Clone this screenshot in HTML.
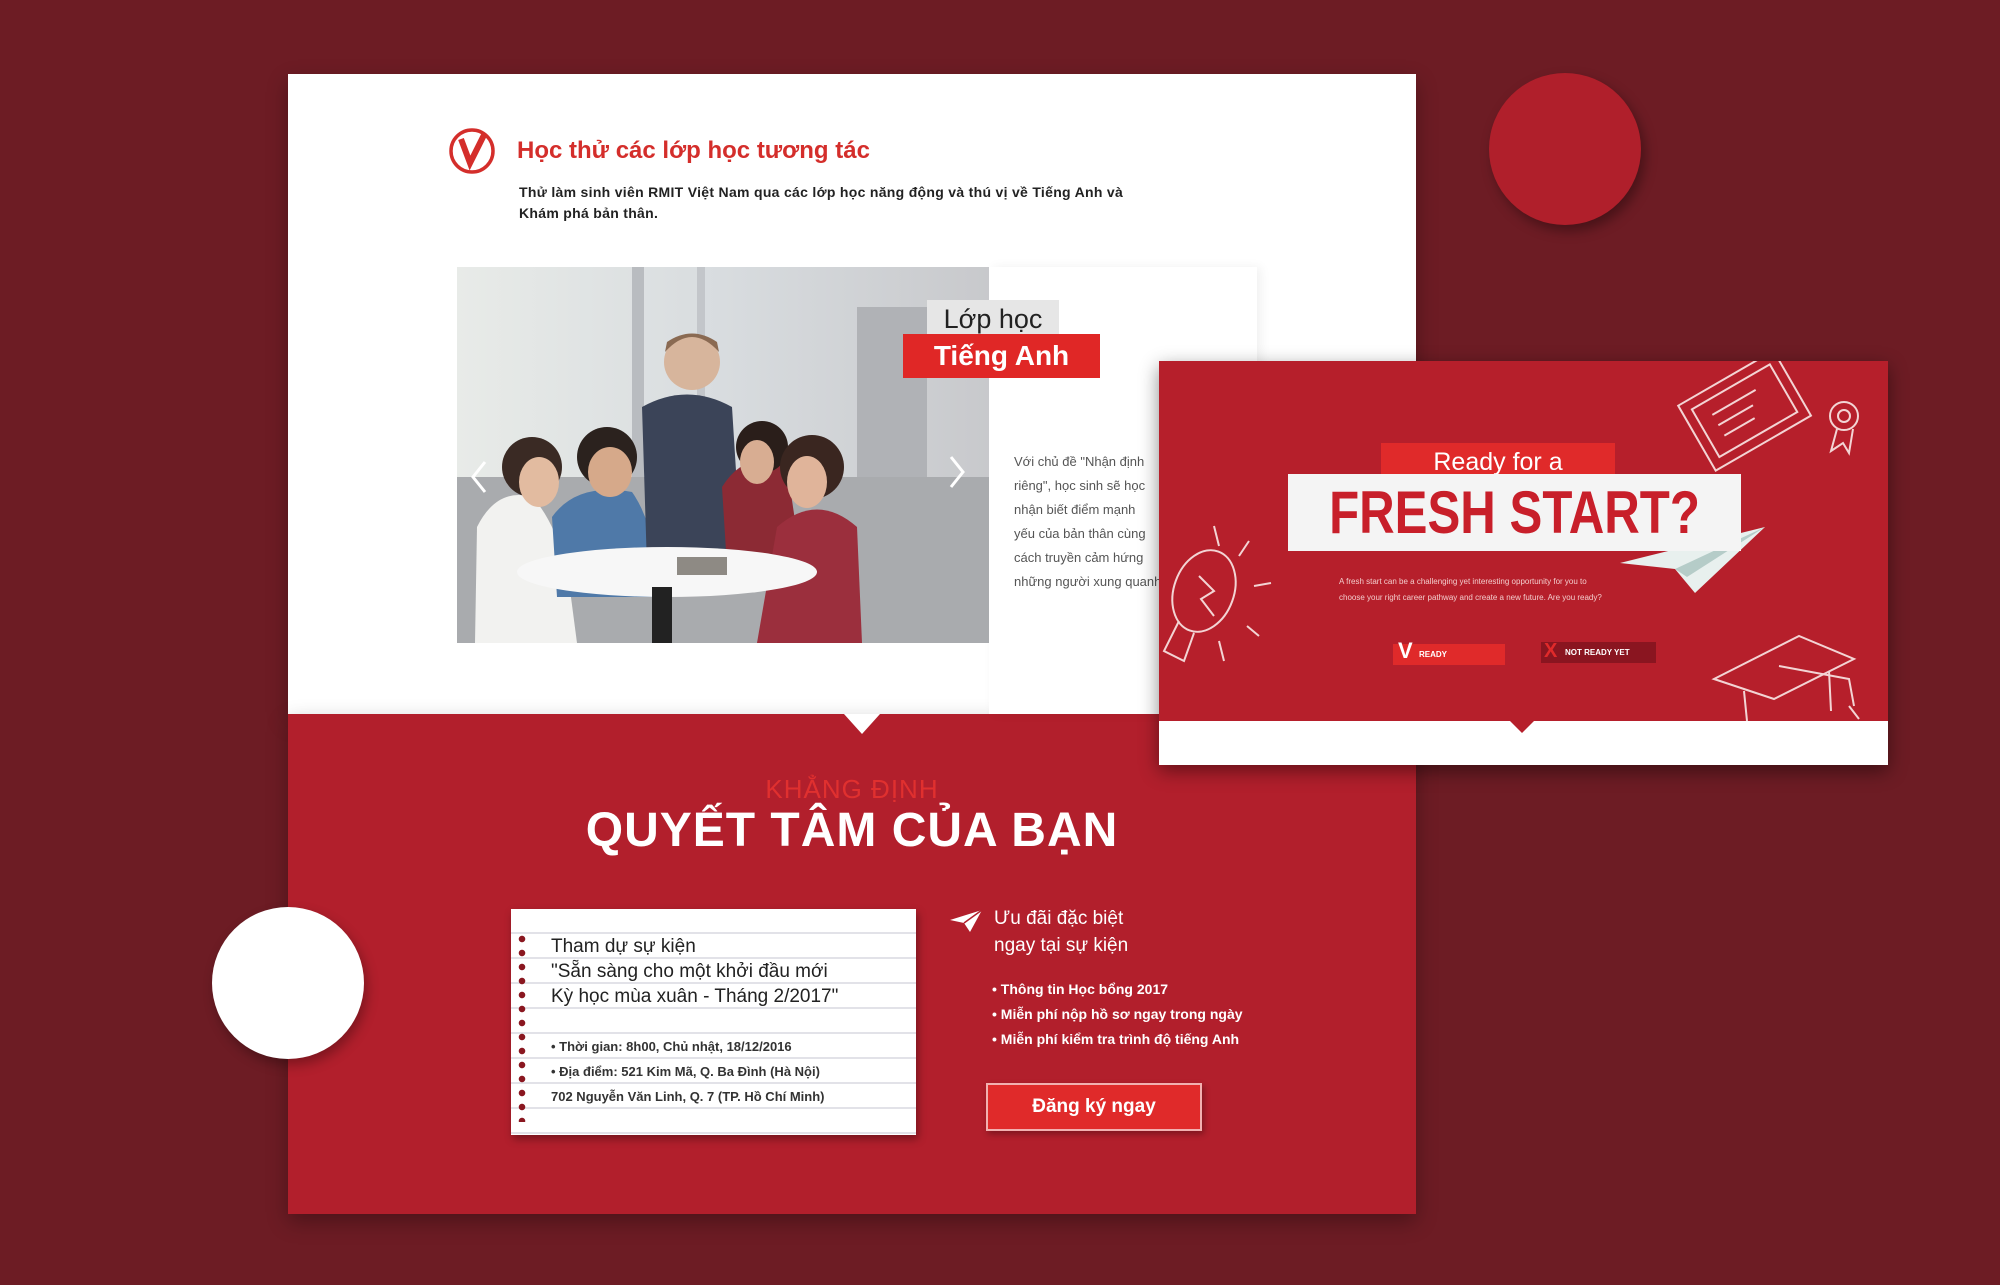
<!DOCTYPE html>
<html><head><meta charset="utf-8"><style>
*{margin:0;padding:0;box-sizing:border-box}
body{width:2000px;height:1285px;background:#6d1c24;position:relative;overflow:hidden;font-family:"Liberation Sans",sans-serif}
.abs{position:absolute}
</style></head><body>
<div class="abs" style="left:1489px;top:73px;width:152px;height:152px;border-radius:50%;background:#b01f2b;box-shadow:4px 6px 12px rgba(0,0,0,.35)"></div>

<!-- main card -->
<div class="abs" style="left:288px;top:74px;width:1128px;height:640px;background:#fff;box-shadow:0 8px 20px rgba(0,0,0,.3)"></div>
<div class="abs" style="left:288px;top:714px;width:1128px;height:500px;background:#b21f2c;box-shadow:0 8px 20px rgba(0,0,0,.3)"></div>
<div class="abs" style="left:844px;top:714px;width:0;height:0;border-left:18px solid transparent;border-right:18px solid transparent;border-top:20px solid #fff"></div>

<!-- logo -->
<svg class="abs" style="left:448px;top:127px" width="48" height="48" viewBox="0 0 48 48"><circle cx="24" cy="24" r="21" fill="none" stroke="#d42e2b" stroke-width="3.5"/><path d="M13 12 L22 36 L36 8" fill="none" stroke="#d42e2b" stroke-width="6"/></svg>
<div class="abs" style="left:517px;top:137px;font-size:24px;font-weight:bold;color:#d42e2b">Học thử các lớp học tương tác</div>
<div class="abs" style="left:519px;top:182px;font-size:14px;font-weight:bold;color:#222;line-height:21px;width:700px;letter-spacing:.3px">Thử làm sinh viên RMIT Việt Nam qua các lớp học năng động và thú vị về Tiếng Anh và<br>Khám phá bản thân.</div>

<div class="abs" style="left:989px;top:267px;width:268px;height:447px;background:#fff;box-shadow:4px 0 10px rgba(0,0,0,.06)"></div>
<!-- photo -->
<svg class="abs" style="left:457px;top:267px" width="532" height="376" viewBox="0 0 532 376">
<defs><linearGradient id="bg" x1="0" x2="1"><stop offset="0" stop-color="#e8ebe8"/><stop offset=".5" stop-color="#d8dcdf"/><stop offset="1" stop-color="#c8c9cc"/></linearGradient></defs>
<rect width="532" height="376" fill="url(#bg)"/>
<rect x="175" y="0" width="12" height="220" fill="#b9bcc0"/><rect x="240" y="0" width="8" height="220" fill="#c3c6ca"/><rect x="400" y="40" width="70" height="180" fill="#b0b2b6"/>
<rect x="0" y="210" width="532" height="166" fill="#a9abae"/>
<path d="M18 376 L20 260 Q40 220 75 230 Q95 250 110 300 L120 376Z" fill="#f2f2f0"/>
<circle cx="75" cy="200" r="30" fill="#3a2a24"/><ellipse cx="82" cy="215" rx="20" ry="25" fill="#e2bba0"/>
<path d="M95 250 Q120 215 175 225 Q200 260 200 330 L100 330Z" fill="#4f79a8"/>
<circle cx="150" cy="190" r="30" fill="#2b221e"/><ellipse cx="153" cy="205" rx="22" ry="25" fill="#d6a98a"/>
<path d="M185 140 Q230 115 275 140 L285 300 L190 300Z" fill="#3b4458"/>
<circle cx="235" cy="95" r="28" fill="#d7b59c"/><path d="M208 85 Q235 55 262 85 L260 75 Q235 58 210 75Z" fill="#8a6a52"/>
<path d="M265 220 Q290 180 330 200 L345 300 L270 300Z" fill="#8c2a34"/>
<circle cx="305" cy="180" r="26" fill="#2a1e1a"/><ellipse cx="300" cy="195" rx="17" ry="22" fill="#d8ad92"/>
<path d="M320 260 Q360 225 400 260 L405 376 L300 376Z" fill="#9b2f3d"/>
<circle cx="355" cy="200" r="32" fill="#3a2620"/><ellipse cx="350" cy="215" rx="20" ry="26" fill="#e0b49a"/>
<ellipse cx="210" cy="305" rx="150" ry="25" fill="#f7f7f7"/><rect x="195" y="320" width="20" height="56" fill="#222"/>
<rect x="220" y="290" width="50" height="18" fill="#8e8a84"/>
<path d="M28 195 L16 210 L28 225" stroke="#fff" stroke-width="3" fill="none"/>
<path d="M494 190 L506 205 L494 220" stroke="#fff" stroke-width="3" fill="none"/>
</svg>
<div class="abs" style="left:927px;top:300px;width:132px;height:38px;background:#e6e6e6;font-size:27px;color:#222;text-align:center;line-height:38px">Lớp học</div>
<div class="abs" style="left:903px;top:334px;width:197px;height:44px;background:#e02726;font-size:28px;color:#fff;text-align:center;line-height:44px;font-weight:bold">Tiếng Anh</div>
<div class="abs" style="left:1014px;top:450px;font-size:13px;color:#555;line-height:24px;white-space:nowrap">Với chủ đề "Nhận định<br>riêng", học sinh sẽ học<br>nhận biết điểm mạnh<br>yếu của bản thân cùng<br>cách truyền cảm hứng<br>những người xung quanh</div>

<!-- red bottom -->
<div class="abs" style="left:288px;top:774px;width:1128px;text-align:center;font-size:26px;color:#e0302f;letter-spacing:1px">KHẲNG ĐỊNH</div>
<div class="abs" style="left:288px;top:803px;width:1128px;text-align:center;font-size:48px;color:#fff;font-weight:bold;letter-spacing:1px">QUYẾT TÂM CỦA BẠN</div>

<div class="abs" style="left:511px;top:909px;width:405px;height:226px;background:#fff;box-shadow:2px 4px 8px rgba(0,0,0,.35);background-image:repeating-linear-gradient(to bottom,#fff 0,#fff 23px,#e2e2e8 23px,#e2e2e8 25px)"></div>
<div class="abs" style="left:518px;top:932px;width:8px;height:190px;background:radial-gradient(circle,#8a1720 3px,transparent 3.5px) 0 0/8px 14px repeat-y"></div>
<div class="abs" style="left:551px;top:934px;font-size:19px;color:#222;line-height:25px;white-space:nowrap">Tham dự sự kiện<br>"Sẵn sàng cho một khởi đầu mới<br>Kỳ học mùa xuân - Tháng 2/2017"</div>
<div class="abs" style="left:551px;top:1034px;font-size:13px;font-weight:bold;color:#333;line-height:25px;white-space:nowrap">• Thời gian:  8h00, Chủ nhật, 18/12/2016<br>• Địa điểm: 521 Kim Mã, Q. Ba Đình (Hà Nội)<br>702 Nguyễn Văn Linh, Q. 7 (TP. Hồ Chí Minh)</div>

<svg class="abs" style="left:948px;top:908px" width="36" height="26" viewBox="0 0 36 26"><path d="M2 12 L34 2 L22 24 L16 15Z" fill="#fff"/><path d="M16 15 L34 2" stroke="#b21f2c" stroke-width="1.5"/></svg>
<div class="abs" style="left:994px;top:905px;font-size:19px;color:#fff;line-height:27px">Ưu đãi đặc biệt<br>ngay tại sự kiện</div>
<div class="abs" style="left:992px;top:977px;font-size:14px;font-weight:bold;color:#fff;line-height:25px;white-space:nowrap">• Thông tin Học bổng 2017<br>• Miễn phí nộp hồ sơ ngay trong ngày<br>• Miễn phí kiểm tra trình độ tiếng Anh</div>
<div class="abs" style="left:986px;top:1083px;width:216px;height:48px;background:#e02a2a;border:2px solid #f2b0b0;color:#fff;font-size:19px;font-weight:bold;text-align:center;line-height:44px;box-shadow:2px 3px 6px rgba(0,0,0,.3)">Đăng ký ngay</div>

<div class="abs" style="left:212px;top:907px;width:152px;height:152px;border-radius:50%;background:#fff;box-shadow:3px 6px 12px rgba(0,0,0,.3)"></div>

<!-- fresh start card -->
<div class="abs" style="left:1159px;top:361px;width:729px;height:404px;background:#fff;box-shadow:0 6px 18px rgba(0,0,0,.45)"></div>
<div class="abs" style="left:1159px;top:361px;width:729px;height:360px;background:#b61f2b"></div>
<div class="abs" style="left:1510px;top:721px;width:0;height:0;border-left:12px solid transparent;border-right:12px solid transparent;border-top:12px solid #b61f2b"></div>
<svg class="abs" style="left:1159px;top:361px" width="729" height="360" viewBox="0 0 729 360" fill="none" stroke="#f3d4d4" stroke-width="2">
<g transform="rotate(-30 580 50)"><rect x="530" y="15" width="110" height="75"/><rect x="540" y="25" width="90" height="55"/><line x1="555" y1="40" x2="605" y2="40"/><line x1="555" y1="52" x2="595" y2="52"/><line x1="555" y1="64" x2="590" y2="64"/></g>
<circle cx="685" cy="55" r="14"/><circle cx="685" cy="55" r="6"/><path d="M678 68 L672 90 L684 82 L690 92 L694 68"/>
<path d="M555 318 L640 275 L695 298 L615 338Z"/><path d="M585 330 L588 360 M670 310 L672 350"/><path d="M620 305 L690 318 L695 345 M690 345 L700 358"/>
<ellipse cx="45" cy="230" rx="30" ry="42" transform="rotate(20 45 230)"/><path d="M20 260 L5 290 L25 300 L35 272"/><path d="M40 215 L55 230 L42 238 L55 255"/>
<path d="M55 165 L60 185 M90 180 L80 195 M95 225 L112 222 M88 265 L100 275 M60 280 L65 300"/>
</svg>
<svg class="abs" style="left:1615px;top:525px" width="150" height="70" viewBox="0 0 150 70"><path d="M150 2 L5 38 L60 44 L80 68Z" fill="#e8f0ee"/><path d="M60 44 L150 2 L72 52Z" fill="#b5ccc8"/></svg>
<div class="abs" style="left:1381px;top:443px;width:234px;height:39px;background:#e02a2a;color:#fff;font-size:25px;text-align:center;line-height:39px">Ready for a</div>
<div class="abs" style="left:1288px;top:474px;width:453px;height:77px;background:#f4f4f4"></div>
<div class="abs" style="left:1288px;top:474px;width:453px;height:77px;color:#c81f2a;font-size:60px;font-weight:bold;text-align:center;line-height:77px;transform:scaleX(.82)">FRESH START?</div>
<div class="abs" style="left:1339px;top:574px;width:340px;font-size:8px;color:#f3cccc;line-height:16px">A fresh start can be a challenging yet interesting opportunity for you to<br>choose your right career pathway and create a new future. Are you ready?</div>
<div class="abs" style="left:1393px;top:644px;width:112px;height:21px;background:#e02a2a;color:#fff;font-size:8px;line-height:21px;padding-left:26px;font-weight:bold">READY</div>
<div class="abs" style="left:1398px;top:638px;color:#fff;font-size:22px;font-weight:bold">V</div>
<div class="abs" style="left:1541px;top:642px;width:115px;height:21px;background:#8a1520;color:#fff;font-size:8px;line-height:21px;padding-left:24px;font-weight:bold">NOT READY YET</div>
<div class="abs" style="left:1544px;top:640px;color:#e02a2a;font-size:20px;font-weight:bold">X</div>
</body></html>
